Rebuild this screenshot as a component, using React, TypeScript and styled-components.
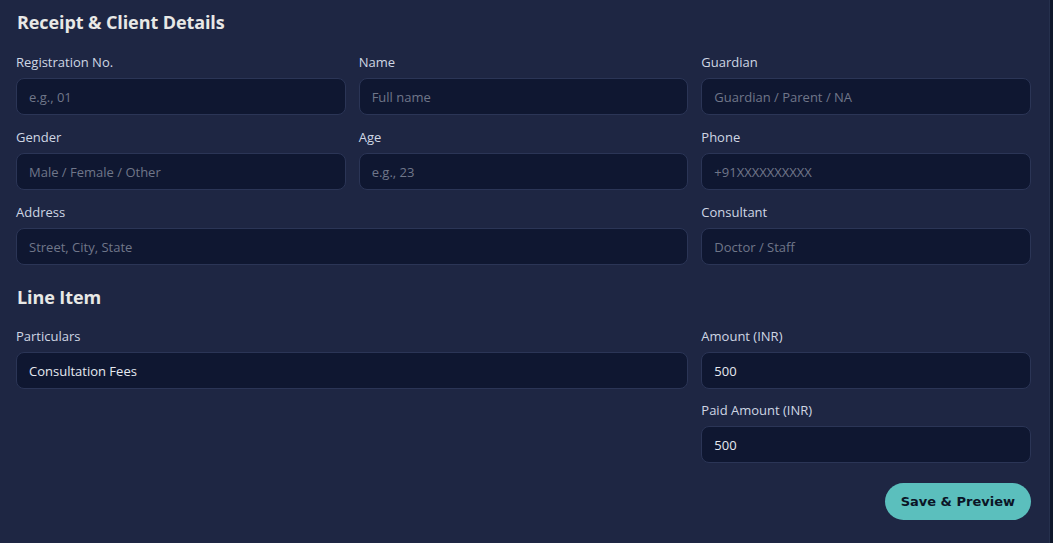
import React from 'react';
import styled, { createGlobalStyle } from 'styled-components';

const Global = createGlobalStyle`
  html, body {
    margin: 0;
    padding: 0;
    background: #0f172a;
    height: 100%;
  }
  body {
    font-family: 'Open Sans', 'Noto Sans', sans-serif;
  }
  * { box-sizing: border-box; }
`;

const Page = styled.div`
  display: flex;
  width: 1053px;
  height: 543px;
  background: #0f172a;
`;

const Panel = styled.form`
  width: 1050px;
  height: 543px;
  background: #1e2643;
  border-right: 1px solid #26304d;
  padding: 10px 18px 0 16px;
  display: flex;
  flex-direction: column;
`;

const Heading = styled.h2<{ $top?: number }>`
  margin: ${(p) => p.$top || 0}px 0 0 1px;
  font-family: 'Open Sans', 'Noto Sans', sans-serif;
  font-size: 18px;
  font-weight: 700;
  color: #e8e8e6;
  line-height: 24px;
  letter-spacing: -0.1px;
`;

const Grid = styled.div<{ $top: number; $gap: number }>`
  display: grid;
  grid-template-columns: 1fr 1fr 1fr;
  column-gap: 13px;
  row-gap: ${(p) => p.$gap}px;
  margin-top: ${(p) => p.$top}px;
`;

const Field = styled.label<{ $span?: number; $col?: number }>`
  display: flex;
  flex-direction: column;
  gap: 7px;
  grid-column: ${(p) => (p.$col ? `${p.$col} / span ${p.$span || 1}` : `span ${p.$span || 1}`)};
`;

const Label = styled.span`
  font-size: 13px;
  line-height: 18px;
  color: #cfd6e3;
  font-weight: 400;
`;

const Input = styled.input`
  height: 37px;
  width: 100%;
  border-radius: 8px;
  border: 1px solid #2b3556;
  background: #0f1731;
  color: #e6e9f0;
  padding: 0 12px;
  font-family: 'Open Sans', 'Noto Sans', sans-serif;
  font-size: 13px;
  outline: none;
  &::placeholder {
    color: #6f7689;
  }
`;

const Footer = styled.div`
  display: flex;
  justify-content: flex-end;
  margin-top: 20px;
`;

const Button = styled.button`
  height: 37px;
  padding: 0 16px;
  border: none;
  border-radius: 19px;
  background: #5bbfbd;
  color: #0b1526;
  font-family: 'DejaVu Sans', Verdana, sans-serif;
  font-size: 13px;
  font-weight: 700;
  cursor: pointer;
`;

type F = { label: string; placeholder?: string; value?: string; span?: number; col?: number };

const client: F[] = [
  { label: 'Registration No.', placeholder: 'e.g., 01' },
  { label: 'Name', placeholder: 'Full name' },
  { label: 'Guardian', placeholder: 'Guardian / Parent / NA' },
  { label: 'Gender', placeholder: 'Male / Female / Other' },
  { label: 'Age', placeholder: 'e.g., 23' },
  { label: 'Phone', placeholder: '+91XXXXXXXXXX' },
  { label: 'Address', placeholder: 'Street, City, State', span: 2 },
  { label: 'Consultant', placeholder: 'Doctor / Staff' },
];

const items: F[] = [
  { label: 'Particulars', value: 'Consultation Fees', span: 2 },
  { label: 'Amount (INR)', value: '500' },
  { label: 'Paid Amount (INR)', value: '500', col: 3 },
];

const renderField = (f: F) => (
  <Field key={f.label} $span={f.span} $col={f.col}>
    <Label>{f.label}</Label>
    <Input placeholder={f.placeholder} defaultValue={f.value} />
  </Field>
);

export default function App() {
  return (
    <Page>
      <Global />
      <Panel onSubmit={(e) => e.preventDefault()}>
        <Heading>Receipt &amp; Client Details</Heading>
        <Grid $top={19} $gap={13}>{client.map(renderField)}</Grid>
        <Heading $top={20}>Line Item</Heading>
        <Grid $top={18} $gap={12}>{items.map(renderField)}</Grid>
        <Footer>
          <Button type="submit">Save &amp; Preview</Button>
        </Footer>
      </Panel>
    </Page>
  );
}
